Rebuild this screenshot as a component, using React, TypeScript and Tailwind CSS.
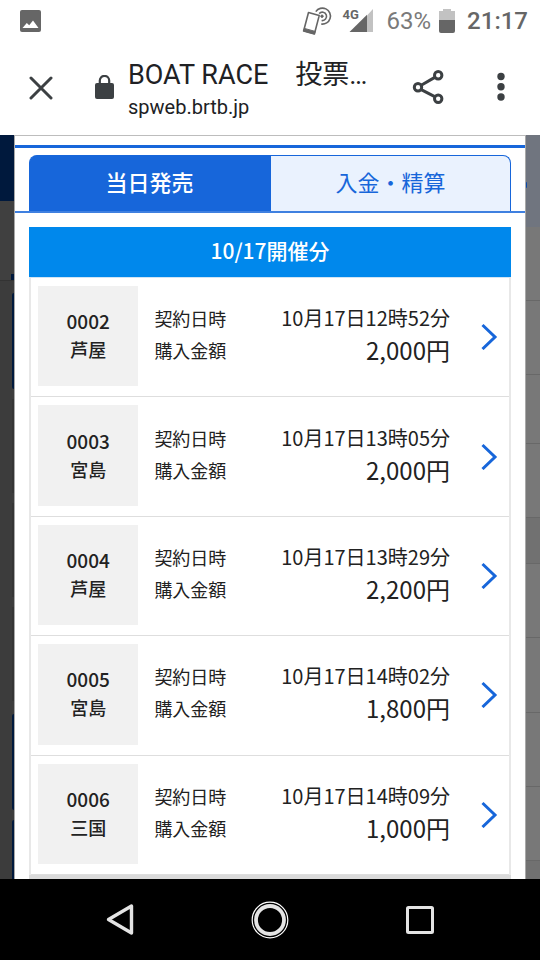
import { ReactNode } from 'react';
import clsx from 'clsx';

type Bet = {
  no: string;
  place: string;
  date: string;
  amount: string;
};

const BETS: Bet[] = [
  { no: '0002', place: '芦屋', date: '10月17日12時52分', amount: '2,000円' },
  { no: '0003', place: '宮島', date: '10月17日13時05分', amount: '2,000円' },
  { no: '0004', place: '芦屋', date: '10月17日13時29分', amount: '2,200円' },
  { no: '0005', place: '宮島', date: '10月17日14時02分', amount: '1,800円' },
  { no: '0006', place: '三国', date: '10月17日14時09分', amount: '1,000円' },
];

function StatusBar() {
  return (
    <div className="flex h-10 items-center justify-between pl-5 pr-3 pt-px text-[#666]">
      <svg width="22" height="22" viewBox="0 0 22 22" className="block">
        <rect width="21" height="22" rx="2" fill="#666" />
        <path d="M2.5 18 6.8 13l2.4 2.2L13 10.5 18.5 18Z" fill="#fff" />
      </svg>
      <div className="flex items-center">
        <svg width="32" height="30" viewBox="0 0 32 30" fill="none" stroke="#666">
          <path d="M7.5 6.5 18.2 9.6 13.4 28 2.6 25Z" strokeWidth="1.6" strokeLinejoin="round" />
          <path d="M3.4 22.4 14.2 25.4 13.4 28 2.6 25Z" fill="#666" />
          <circle cx="21" cy="10.2" r="1.2" fill="#666" />
          <path d="M18.2 7.6a4.2 4.2 0 1 1 2.4 6.9" strokeWidth="1.6" />
          <path d="M14.8 5.6a8 8 0 1 1 5.4 12.4" strokeWidth="1.6" />
        </svg>
        <div className="relative ml-2 h-6 w-8">
          <svg width="32" height="24" viewBox="0 0 32 24">
            <path d="M26 6.5 32 0v23h-6Z" fill="#c2c2c2" />
            <path d="M8.5 23 26 5.8V23Z" fill="#666" />
          </svg>
          <span className="absolute left-[2px] top-0 text-[13px] font-bold leading-3">4G</span>
        </div>
        <span className="ml-[14px] text-[24px] leading-6 text-[#7a7a7a]">63%</span>
        <svg width="16" height="24" viewBox="0 0 16 24" className="ml-2">
          <path d="M4 0h8v2h4v9H0V2h4Z" fill="#c2c2c2" />
          <path d="M0 11h16v11a2 2 0 0 1-2 2H2a2 2 0 0 1-2-2Z" fill="#666" />
        </svg>
        <span className="ml-3 text-[24px] font-medium leading-6">21:17</span>
      </div>
    </div>
  );
}

function Toolbar() {
  return (
    <div className="flex h-[95px] items-center pb-px pl-7 pr-6">
      <button aria-label="閉じる">
        <svg width="25" height="25" viewBox="0 0 25 25" stroke="#3c4043" strokeWidth="3" strokeLinecap="round">
          <path d="M3 3 23 23M23 3 3 23" />
        </svg>
      </button>
      <svg width="19" height="24" viewBox="0 0 19 24" className="ml-[42px] shrink-0">
        <rect y="8" width="19" height="16" rx="2" fill="#3c4043" />
        <path d="M4.8 9V5.6a4.7 4.7 0 0 1 9.4 0V9" fill="none" stroke="#3c4043" strokeWidth="2.2" />
      </svg>
      <div className="ml-[14px] min-w-0 flex-1 pt-2 text-[#202124]">
        <h1 className="truncate text-[27px] leading-8">BOAT RACE　投票…</h1>
        <p className="text-[20px] leading-8">spweb.brtb.jp</p>
      </div>
      <button aria-label="共有" className="ml-4">
        <svg width="32" height="36" viewBox="0 0 32 36" fill="none" stroke="#3c4043" strokeWidth="3">
          <path d="M23.2 8.1 9.2 16.3M9.2 20.7 23.2 27.9" />
          <circle cx="26.2" cy="6.2" r="3.7" />
          <circle cx="6" cy="18.2" r="3.7" />
          <circle cx="26.2" cy="29.8" r="3.7" />
        </svg>
      </button>
      <button aria-label="メニュー" className="ml-[42px]">
        <svg width="30" height="30" viewBox="0 0 30 30" fill="#3c4043">
          <circle cx="15" cy="4.5" r="3.7" />
          <circle cx="15" cy="14.8" r="3.7" />
          <circle cx="15" cy="25" r="3.7" />
        </svg>
      </button>
    </div>
  );
}

// The dimmed page that shows on both sides of the panel
function LeftBackdrop() {
  return (
    <div className="flex w-[14px] shrink-0 flex-col items-end bg-[#3c3c3c]">
      <div className="h-[66px] w-full shrink-0 bg-[#00193d]" />
      <div className="flex h-20 w-full shrink-0 flex-col items-end justify-end border-b border-[#333] bg-[#404040]">
        <div className="h-[6px] w-[3px] bg-[#00193d]" />
      </div>
      <div className="mt-3 h-24 w-[2px] shrink-0 rounded-l bg-[#00193d]" />
      <div className="mt-[10px] h-[94px] w-[2px] shrink-0 bg-[#353535]" />
      <div className="mt-[10px] h-[94px] w-[2px] shrink-0 bg-[#353535]" />
      <div className="mt-[10px] h-[94px] w-[2px] shrink-0 bg-[#353535]" />
      <div className="mt-[13px] h-24 w-[2px] shrink-0 rounded-l bg-[#00193d]" />
      <div className="mt-[10px] w-[2px] flex-1 rounded-tl bg-[#00193d]" />
    </div>
  );
}

function RightBackdrop() {
  return (
    <div className="flex w-[14px] shrink-0 flex-col bg-[#787878]">
      <div className="flex h-[92px] shrink-0 items-center bg-[#70757f]">
        <div className="mt-2 h-[6px] w-px rounded-r bg-[#0b4aa8]" />
      </div>
      <div className="h-[74px] shrink-0 border-b border-[#686868]" />
      <div className="h-[74px] shrink-0 border-b border-[#686868]" />
      <div className="h-[69px] shrink-0 border-b border-[#686868]" />
      <div className="h-[74px] shrink-0 border-b border-[#686868]" />
      <div className="h-[46px] shrink-0 border-b border-[#686868] bg-[#717171]" />
      <div className="h-[74px] shrink-0 border-b border-[#686868]" />
      <div className="h-[75px] shrink-0 border-b border-[#686868]" />
      <div className="h-[74px] shrink-0 border-b border-[#686868]" />
      <div className="h-[74px] shrink-0 border-b border-[#686868]" />
      <div className="flex-1 bg-[#717171]" />
    </div>
  );
}

function Tab({ active, children }: { active?: boolean; children: ReactNode }) {
  return (
    <button
      role="tab"
      aria-selected={!!active}
      className={clsx(
        'flex-1 border border-b-0 border-[#1766da] pb-1 text-[22px] leading-[51px]',
        active
          ? 'rounded-tl-lg bg-[#1766da] font-medium text-white'
          : 'rounded-tr-lg bg-[#eaf2fe] text-[#1766da]'
      )}
    >
      {children}
    </button>
  );
}

function BetRow({ bet }: { bet: Bet }) {
  return (
    <li className="border-b border-[#dedede]">
      <a href="#" className="flex pb-[10px] pt-2">
        <div className="ml-[7px] flex aspect-square w-[21%] shrink-0 flex-col items-center justify-center bg-[#f1f1f1] pb-[2px] font-medium">
          <span className="text-[19px] leading-7">{bet.no}</span>
          <span className="text-[18px] leading-7">{bet.place}</span>
        </div>
        <dl className="ml-4 flex flex-1 flex-col justify-center pb-1">
          <div className="flex items-center justify-between">
            <dt className="text-[18px] leading-8">契約日時</dt>
            <dd className="text-[20px] leading-8">{bet.date}</dd>
          </div>
          <div className="flex items-center justify-between">
            <dt className="text-[18px] leading-8">購入金額</dt>
            <dd className="text-[24px] leading-8">{bet.amount}</dd>
          </div>
        </dl>
        <svg
          width="18"
          height="28"
          viewBox="0 0 18 28"
          className="ml-[30px] mr-[11px] self-center"
          fill="none"
          stroke="#1766da"
          strokeWidth="3"
        >
          <path d="M2.5 3 15 15 2.5 27" />
        </svg>
      </a>
    </li>
  );
}

function NavBar() {
  return (
    <nav className="grid h-[81px] shrink-0 grid-cols-3 items-center justify-items-center bg-black px-[45px]">
      <button aria-label="戻る">
        <svg width="32" height="36" viewBox="0 0 32 36" fill="none" stroke="#e4e4e4" strokeWidth="3.4" strokeLinejoin="round">
          <path d="M4.5 17.5 27.5 4V31Z" />
        </svg>
      </button>
      <button aria-label="ホーム">
        <svg width="38" height="38" viewBox="0 0 38 38" fill="none" stroke="#e4e4e4">
          <circle cx="19" cy="19" r="17.8" stroke="#fff" strokeWidth="1.2" />
          <circle cx="19" cy="19" r="14" strokeWidth="3.8" />
        </svg>
      </button>
      <button aria-label="アプリ履歴">
        <svg width="30" height="30" viewBox="0 0 30 30" fill="none" stroke="#e4e4e4" strokeWidth="3">
          <rect x="2.5" y="2.5" width="25" height="25" rx="1" />
        </svg>
      </button>
    </nav>
  );
}

export default function App() {
  return (
    <div className="flex h-dvh flex-col bg-white font-[Roboto,'Noto_Sans_CJK_JP',sans-serif]">
      <header className="shrink-0">
        <StatusBar />
        <Toolbar />
      </header>

      <div className="flex min-h-0 flex-1 overflow-hidden">
        <LeftBackdrop />
        <main className="min-w-0 flex-1 border-x border-t border-x-[#a8a8a8] border-t-[#bdbdbd] bg-white font-['Noto_Sans_CJK_JP',sans-serif] text-[#222]">
          <div className="mt-[9px] h-[3px] bg-[#1766da]" />
          <div role="tablist" className="mt-[7px] flex border-b-2 border-[#3f80e0] px-[14px]">
            <Tab active>当日発売</Tab>
            <Tab>入金・精算</Tab>
          </div>

          <section className="mx-[14px] mt-[14px]">
            <h2 className="bg-[#0088ec] pb-1 text-center text-[21px] font-medium leading-[46px] text-white">10/17開催分</h2>
            <ul className="border-x-2 border-t border-x-[#e8e8e8] border-t-[#d0e4f4]">
              {BETS.map((bet) => (
                <BetRow key={bet.no} bet={bet} />
              ))}
            </ul>
            <div className="h-10 bg-[#dadada]" />
          </section>
        </main>
        <RightBackdrop />
      </div>

      <NavBar />
    </div>
  );
}
